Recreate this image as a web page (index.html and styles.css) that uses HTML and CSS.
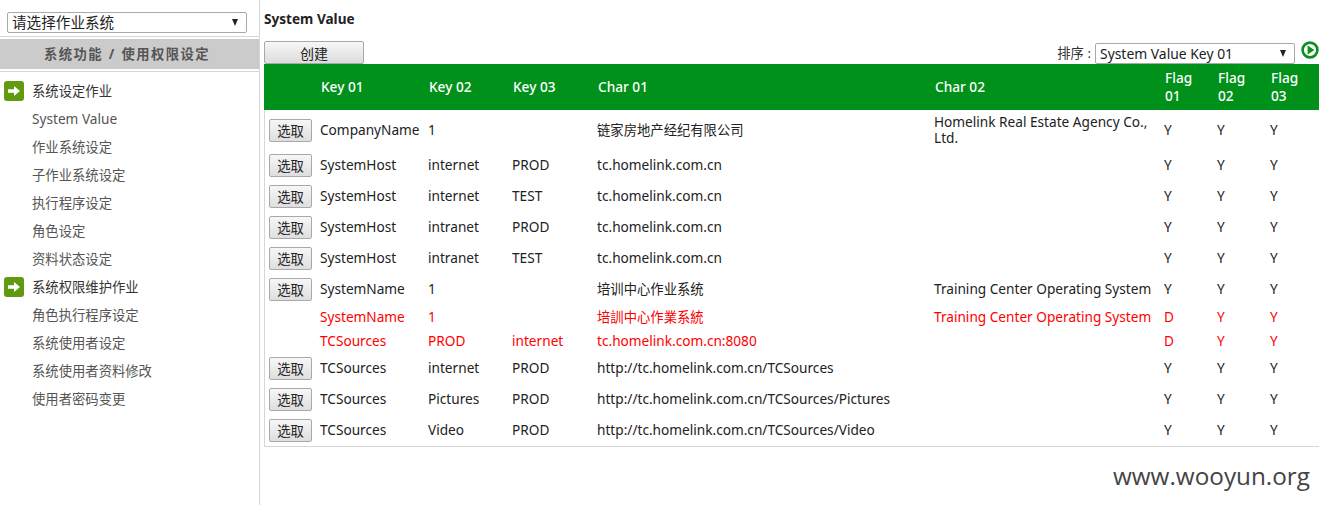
FILE: index.html
```html
<!DOCTYPE html>
<html lang="en">
<head>
    <meta charset="UTF-8">
    <meta name="viewport" content="width=device-width, initial-scale=1.0">
    <title>System Value</title>
    <link rel="stylesheet" href="styles.css">
</head>
<body>
    <div class="page">
        <div class="sidebar">
            <div class="sys-select-box">
                <div class="fake-select sys-select"><span>请选择作业系统</span><i class="caret"></i></div>
            </div>
            <div class="panel-title"><span>系统功能 / 使用权限设定</span></div>
            <ul class="menu">
                <li class="group"><svg class="arrow" viewBox="0 0 20 20"><rect width="20" height="20" rx="3" fill="#5f9a10"/><path d="M4 8.2h6V5l6 5-6 5v-3.2H4z" fill="#fff"/></svg>系统设定作业</li>
                <li class="latin">System Value</li>
                <li>作业系统设定</li>
                <li>子作业系统设定</li>
                <li>执行程序设定</li>
                <li>角色设定</li>
                <li>资料状态设定</li>
                <li class="group"><svg class="arrow" viewBox="0 0 20 20"><rect width="20" height="20" rx="3" fill="#5f9a10"/><path d="M4 8.2h6V5l6 5-6 5v-3.2H4z" fill="#fff"/></svg>系统权限维护作业</li>
                <li>角色执行程序设定</li>
                <li>系统使用者设定</li>
                <li>系统使用者资料修改</li>
                <li>使用者密码变更</li>
            </ul>
        </div>
        <div class="main">
            <h3 class="title">System Value</h3>
            <div class="toolbar">
                <button type="button" class="create-btn">创建</button>
                <div class="sort">
                    <span class="sort-label">排序 :</span>
                    <div class="fake-select sort-select"><span>System Value Key 01</span><i class="caret"></i></div>
                    <svg class="go" viewBox="0 0 18 18"><circle cx="9" cy="9" r="7.4" fill="#fff" stroke="#0a8f1e" stroke-width="2.6"/><path d="M6.6 4.4 13.4 9l-6.8 4.6z" fill="#0a8f1e"/></svg>
                </div>
            </div>
            <table class="grid">
                <colgroup>
                    <col class="c-btn"><col class="c-key1"><col class="c-key2"><col class="c-key3"><col class="c-char1"><col class="c-char2"><col class="c-flag"><col class="c-flag"><col class="c-flag">
                </colgroup>
                <thead>
                    <tr><th></th><th>Key 01</th><th>Key 02</th><th>Key 03</th><th>Char 01</th><th>Char 02</th><th>Flag<br>01</th><th>Flag<br>02</th><th>Flag<br>03</th></tr>
                </thead>
                <tbody>
                    <tr class="first"><td><button type="button" class="pick">选取</button></td><td>CompanyName</td><td>1</td><td></td><td class="cn">链家房地产经纪有限公司</td><td>Homelink Real Estate Agency Co., Ltd.</td><td>Y</td><td>Y</td><td>Y</td></tr>
                    <tr><td><button type="button" class="pick">选取</button></td><td>SystemHost</td><td>internet</td><td>PROD</td><td>tc.homelink.com.cn</td><td></td><td>Y</td><td>Y</td><td>Y</td></tr>
                    <tr><td><button type="button" class="pick">选取</button></td><td>SystemHost</td><td>internet</td><td>TEST</td><td>tc.homelink.com.cn</td><td></td><td>Y</td><td>Y</td><td>Y</td></tr>
                    <tr><td><button type="button" class="pick">选取</button></td><td>SystemHost</td><td>intranet</td><td>PROD</td><td>tc.homelink.com.cn</td><td></td><td>Y</td><td>Y</td><td>Y</td></tr>
                    <tr><td><button type="button" class="pick">选取</button></td><td>SystemHost</td><td>intranet</td><td>TEST</td><td>tc.homelink.com.cn</td><td></td><td>Y</td><td>Y</td><td>Y</td></tr>
                    <tr><td><button type="button" class="pick">选取</button></td><td>SystemName</td><td>1</td><td></td><td class="cn">培训中心作业系统</td><td>Training Center Operating System</td><td>Y</td><td>Y</td><td>Y</td></tr>
                    <tr class="deleted"><td></td><td>SystemName</td><td>1</td><td></td><td class="cn">培訓中心作業系統</td><td>Training Center Operating System</td><td>D</td><td>Y</td><td>Y</td></tr>
                    <tr class="deleted"><td></td><td>TCSources</td><td>PROD</td><td>internet</td><td>tc.homelink.com.cn:8080</td><td></td><td>D</td><td>Y</td><td>Y</td></tr>
                    <tr><td><button type="button" class="pick">选取</button></td><td>TCSources</td><td>internet</td><td>PROD</td><td>http://tc.homelink.com.cn/TCSources</td><td></td><td>Y</td><td>Y</td><td>Y</td></tr>
                    <tr><td><button type="button" class="pick">选取</button></td><td>TCSources</td><td>Pictures</td><td>PROD</td><td>http://tc.homelink.com.cn/TCSources/Pictures</td><td></td><td>Y</td><td>Y</td><td>Y</td></tr>
                    <tr><td><button type="button" class="pick">选取</button></td><td>TCSources</td><td>Video</td><td>PROD</td><td>http://tc.homelink.com.cn/TCSources/Video</td><td></td><td>Y</td><td>Y</td><td>Y</td></tr>
                </tbody>
            </table>
        </div>
    </div>
    <div class="watermark">www.wooyun.org</div>
</body>
</html>
```

FILE: styles.css
```css
html, body {
    margin: 0;
    padding: 0;
    height: 505px;
    overflow: hidden;
    background-color: white;
}

body {
    font-family: "Noto Sans", "Noto Sans CJK SC", sans-serif;
    font-size: 13.65px;
    color: #333;
}

.page {
    display: flex;
    height: 505px;
}

.sidebar {
    width: 259px;
    flex: none;
    border-right: 1px solid #d6d6d6;
}

.sys-select-box {
    padding: 12px 12px 3px 7px;
}

.fake-select {
    display: flex;
    align-items: center;
    justify-content: space-between;
    box-sizing: border-box;
    height: 21px;
    padding: 0 6px 0 4px;
    background-color: white;
    border: 1px solid #a9a9a9;
    border-radius: 2px;
    color: #222;
    line-height: 19px;
}

.sys-select {
    width: 240px;
    font-size: 14.6px;
}

.caret {
    width: 0;
    height: 0;
    margin-right: 2px;
    border-left: 3.5px solid transparent;
    border-right: 3.5px solid transparent;
    border-top: 7px solid #222;
}

.panel-title {
    padding: 2px 0;
    border-top: 1px solid #d6d6d6;
    border-bottom: 1px solid #d6d6d6;
}

.panel-title span {
    display: block;
    height: 30px;
    padding-right: 5px;
    line-height: 30px;
    background-color: #cbcbcb;
    color: #555;
    font-weight: bold;
    font-size: 13.33px;
    letter-spacing: 1.4px;
    text-align: center;
    word-spacing: 1px;
}

.menu {
    list-style: none;
    margin: 0;
    padding: 5px 0 0 32px;
}

.menu li {
    position: relative;
    height: 28px;
    line-height: 28px;
    color: #555;
    font-size: 13.33px;
}

.menu .latin {
    font-size: 13.65px;
}

.menu .group {
    color: #333;
}

.arrow {
    position: absolute;
    left: -28px;
    top: 4px;
    width: 20px;
    height: 20px;
}

.main {
    flex: 1;
    min-width: 0;
    padding-left: 4px;
}

.title {
    margin: 0;
    padding-top: 10px;
    height: 31px;
    box-sizing: border-box;
    line-height: 17px;
    font-size: 13.6px;
    font-weight: bold;
    color: #222;
}

.toolbar {
    display: flex;
    justify-content: space-between;
    align-items: flex-end;
    height: 23px;
    margin-top: 10px;
}

.create-btn {
    width: 100px;
    height: 23px;
    padding: 0;
    border: 1px solid #a9a9a9;
    border-radius: 2px;
    background: linear-gradient(#f7f7f7, #dcdcdc);
    font-family: inherit;
    font-size: 14px;
    color: #222;
}

.sort {
    display: flex;
    align-items: center;
    height: 23px;
}

.sort-label {
    margin-right: 4px;
    font-size: 13.33px;
}

.sort-select {
    width: 200px;
    margin-top: 2px;
    font-size: 13.9px;
}

.go {
    width: 18px;
    height: 18px;
    margin: -6px 0 0 6px;
}

.grid {
    width: 1055px;
    table-layout: fixed;
    border-collapse: separate;
    border-spacing: 0;
    border-bottom: 1px solid #d6d6d6;
    color: #222;
}

.c-btn { width: 53px; }
.c-key1 { width: 108px; }
.c-key2 { width: 84px; }
.c-key3 { width: 85px; }
.c-char1 { width: 337px; }
.c-char2 { width: 230px; }
.c-flag { width: 53px; }

.grid th {
    height: 46px;
    padding: 0 3px 0 4px;
    background-color: #00911a;
    color: white;
    font-weight: 500;
    text-align: left;
    line-height: 18px;
}

.grid td {
    height: 29px;
    padding: 0 2px 2px 3px;
    line-height: 16px;
}

.grid td:first-child {
    border-left: 1px solid #d6d6d6;
}

.grid .first td {
    height: 40px;
    padding-bottom: 0;
}

.grid .deleted td {
    height: 24px;
    padding-bottom: 0;
    color: #ff0000;
}

.grid .cn {
    font-size: 13.33px;
}

.pick {
    display: block;
    width: 43px;
    height: 23px;
    margin: 2px 0 0 1px;
    padding: 0;
    border: 1px solid #a9a9a9;
    border-radius: 2px;
    background: linear-gradient(#f7f7f7, #dedede);
    font-family: inherit;
    font-size: 13.33px;
    color: #222;
}

.first .pick {
    margin-top: 0;
}

.watermark {
    position: absolute;
    right: 9px;
    top: 460px;
    font-family: "Open Sans", sans-serif;
    font-size: 24.3px;
    line-height: 32px;
    color: #444;
}
```
